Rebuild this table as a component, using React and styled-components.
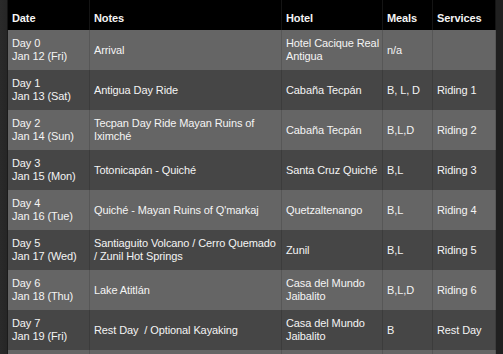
import React from "react";
import styled, { createGlobalStyle } from "styled-components";

const GlobalStyle = createGlobalStyle`
  html, body {
    margin: 0;
    padding: 0;
    background: #222222;
  }
  body {
    font-family: "Liberation Sans", Arial, Helvetica, sans-serif;
  }
`;

const itinerary = [
  { day: "Day 0", date: "Jan 12 (Fri)", notes: "Arrival", hotel: "Hotel Cacique Real Antigua", meals: "n/a", services: "" },
  { day: "Day 1", date: "Jan 13 (Sat)", notes: "Antigua Day Ride", hotel: "Cabaña Tecpán", meals: "B, L, D", services: "Riding 1" },
  { day: "Day 2", date: "Jan 14 (Sun)", notes: "Tecpan Day Ride Mayan Ruins of Iximché", hotel: "Cabaña Tecpán", meals: "B,L,D", services: "Riding 2" },
  { day: "Day 3", date: "Jan 15 (Mon)", notes: "Totonicapán - Quiché", hotel: "Santa Cruz Quiché", meals: "B,L", services: "Riding 3" },
  { day: "Day 4", date: "Jan 16 (Tue)", notes: "Quiché - Mayan Ruins of Q'markaj", hotel: "Quetzaltenango", meals: "B,L", services: "Riding 4" },
  { day: "Day 5", date: "Jan 17 (Wed)", notes: "Santiaguito Volcano / Cerro Quemado / Zunil Hot Springs", hotel: "Zunil", meals: "B,L", services: "Riding 5" },
  { day: "Day 6", date: "Jan 18 (Thu)", notes: "Lake Atitlán", hotel: "Casa del Mundo Jaibalito", meals: "B,L,D", services: "Riding 6" },
  { day: "Day 7", date: "Jan 19 (Fri)", notes: "Rest Day\u00a0 / Optional Kayaking", hotel: "Casa del Mundo Jaibalito", meals: "B", services: "Rest Day" },
  { day: "", date: "", notes: "", hotel: "", meals: "", services: "" },
];

const Page = styled.div`
  padding: 0 8px 0 7px;
  background: linear-gradient(to right, #2a2a2a 0, #262626 7px, #202020 7px);
`;

const Table = styled.table`
  width: 488px;
  table-layout: fixed;
  border-collapse: collapse;
  border-spacing: 0;
  font-size: 11px;
  line-height: 13px;
  letter-spacing: -0.1px;
  color: #f4f4f4;
`;

const HeadCell = styled.th`
  height: 30px;
  box-sizing: border-box;
  padding: 0 1px 5px 4px;
  background: #000;
  text-align: left;
  vertical-align: bottom;
  font-weight: bold;
  border-left: 1px solid #141414;
  border-right: 1px solid #141414;
  white-space: nowrap;
`;

const Row = styled.tr`
  background: ${(p) => (p.$light ? "#656565" : "#464646")};
`;

const Cell = styled.td`
  height: 40px;
  box-sizing: border-box;
  padding: 0 1px 0 4px;
  vertical-align: middle;
  text-align: left;
  border: 1px solid rgba(0, 0, 0, 0.13);
  border-top: none;
  border-bottom: none;
`;

const Line = styled.div`
  white-space: nowrap;
`;

export default function App() {
  return (
    <>
      <GlobalStyle />
      <Page>
        <Table>
          <colgroup>
            <col style={{ width: 82 }} />
            <col style={{ width: 192 }} />
            <col style={{ width: 101 }} />
            <col style={{ width: 50 }} />
            <col style={{ width: 63 }} />
          </colgroup>
          <thead>
            <tr>
              <HeadCell>Date</HeadCell>
              <HeadCell>Notes</HeadCell>
              <HeadCell>Hotel</HeadCell>
              <HeadCell>Meals</HeadCell>
              <HeadCell>Services</HeadCell>
            </tr>
          </thead>
          <tbody>
            {itinerary.map((d, i) => (
              <Row key={i} $light={i % 2 === 0}>
                <Cell>
                  <Line>{d.day}</Line>
                  <Line>{d.date}</Line>
                </Cell>
                <Cell>{d.notes}</Cell>
                <Cell>{d.hotel}</Cell>
                <Cell>{d.meals}</Cell>
                <Cell>{d.services}</Cell>
              </Row>
            ))}
          </tbody>
        </Table>
      </Page>
    </>
  );
}
